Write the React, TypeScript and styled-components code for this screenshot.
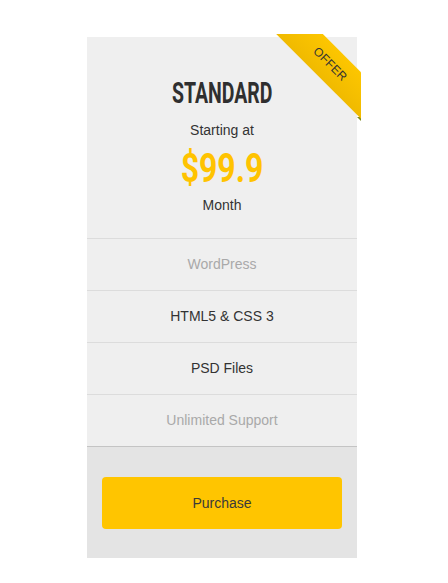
import styled, { createGlobalStyle } from "styled-components";

const GlobalStyle = createGlobalStyle`
  html, body {
    margin: 0;
    padding: 0;
    background: #fff;
  }
  body {
    font-family: "Liberation Sans", Arial, sans-serif;
  }
`;

type Feature = {
  label: string;
  muted?: boolean;
};

const features: Feature[] = [
  { label: "WordPress", muted: true },
  { label: "HTML5 & CSS 3" },
  { label: "PSD Files" },
  { label: "Unlimited Support", muted: true },
];

const App = () => {
  return (
    <Page>
      <GlobalStyle />
      <Card>
        <RibbonClip>
          <Ribbon>OFFER</Ribbon>
        </RibbonClip>
        <Fold />
        <Header>
          <Title>
            <Squeeze $scale={0.66}>STANDARD</Squeeze>
          </Title>
          <Caption>Starting at</Caption>
          <Price>
            <Squeeze $scale={0.78}>$99.9</Squeeze>
          </Price>
          <Period>Month</Period>
        </Header>
        <FeatureList>
          {features.map((f) => (
            <FeatureRow key={f.label} $muted={f.muted}>
              {f.label}
            </FeatureRow>
          ))}
        </FeatureList>
        <Footer>
          <PurchaseButton type="button">Purchase</PurchaseButton>
        </Footer>
      </Card>
    </Page>
  );
};

export default App;

const Page = styled.main`
  padding: 37px 0 25px 87px;
`;

const Card = styled.section`
  position: relative;
  width: 270px;
  background: #efefef;
`;

const RibbonClip = styled.div`
  position: absolute;
  top: -3px;
  right: -4px;
  width: 85px;
  height: 85px;
  overflow: hidden;
  z-index: 2;
`;

const Ribbon = styled.div`
  position: absolute;
  left: -11px;
  top: 14px;
  width: 130px;
  height: 33px;
  line-height: 33px;
  text-align: center;
  transform: rotate(45deg);
  background: linear-gradient(to bottom, #fdc600, #f0ba00);
  color: #333;
  font-size: 12px;
  letter-spacing: 0.3px;
`;

const Fold = styled.div`
  position: absolute;
  top: 80px;
  right: -4px;
  width: 0;
  height: 0;
  border-left: 4px solid transparent;
  border-top: 4px solid #7d8a1c;
  z-index: 1;
`;

const Header = styled.header`
  display: flex;
  flex-direction: column;
  align-items: center;
  padding: 41px 0 23px;
`;

const Squeeze = styled.span<{ $scale: number }>`
  display: inline-block;
  transform: scaleX(${(p) => p.$scale});
`;

const Title = styled.h2`
  margin: 0;
  font-family: Roboto, "Liberation Sans", sans-serif;
  font-weight: 700;
  font-size: 29.5px;
  line-height: 30px;
  color: #2f2f2f;
  white-space: nowrap;
`;

const Caption = styled.p`
  margin: 12px 0 0;
  font-size: 14px;
  line-height: 20px;
  color: #333;
`;

const Price = styled.div`
  margin-top: 6px;
  font-family: Roboto, "Liberation Sans", sans-serif;
  font-weight: 700;
  font-size: 41px;
  line-height: 44px;
  color: #ffc300;
  white-space: nowrap;
`;

const Period = styled.p`
  margin: 5px 0 0;
  font-size: 14px;
  line-height: 20px;
  color: #333;
`;

const FeatureList = styled.ul`
  list-style: none;
  margin: 0;
  padding: 0;
  border-bottom: 1px solid #c4c4c4;
`;

const FeatureRow = styled.li<{ $muted?: boolean }>`
  border-top: 1px solid #dcdcdc;
  height: 51px;
  line-height: 51px;
  text-align: center;
  font-size: 14px;
  color: ${(p) => (p.$muted ? "#a9a9a9" : "#333")};
`;

const Footer = styled.footer`
  display: flex;
  padding: 30px 15px 29px;
  background: #e4e4e4;
`;

const PurchaseButton = styled.button`
  flex: 1;
  height: 52px;
  border: none;
  border-radius: 4px;
  background: #ffc500;
  color: #3a3a3a;
  font-family: "Liberation Sans", Arial, sans-serif;
  font-size: 14px;
  cursor: pointer;
`;
